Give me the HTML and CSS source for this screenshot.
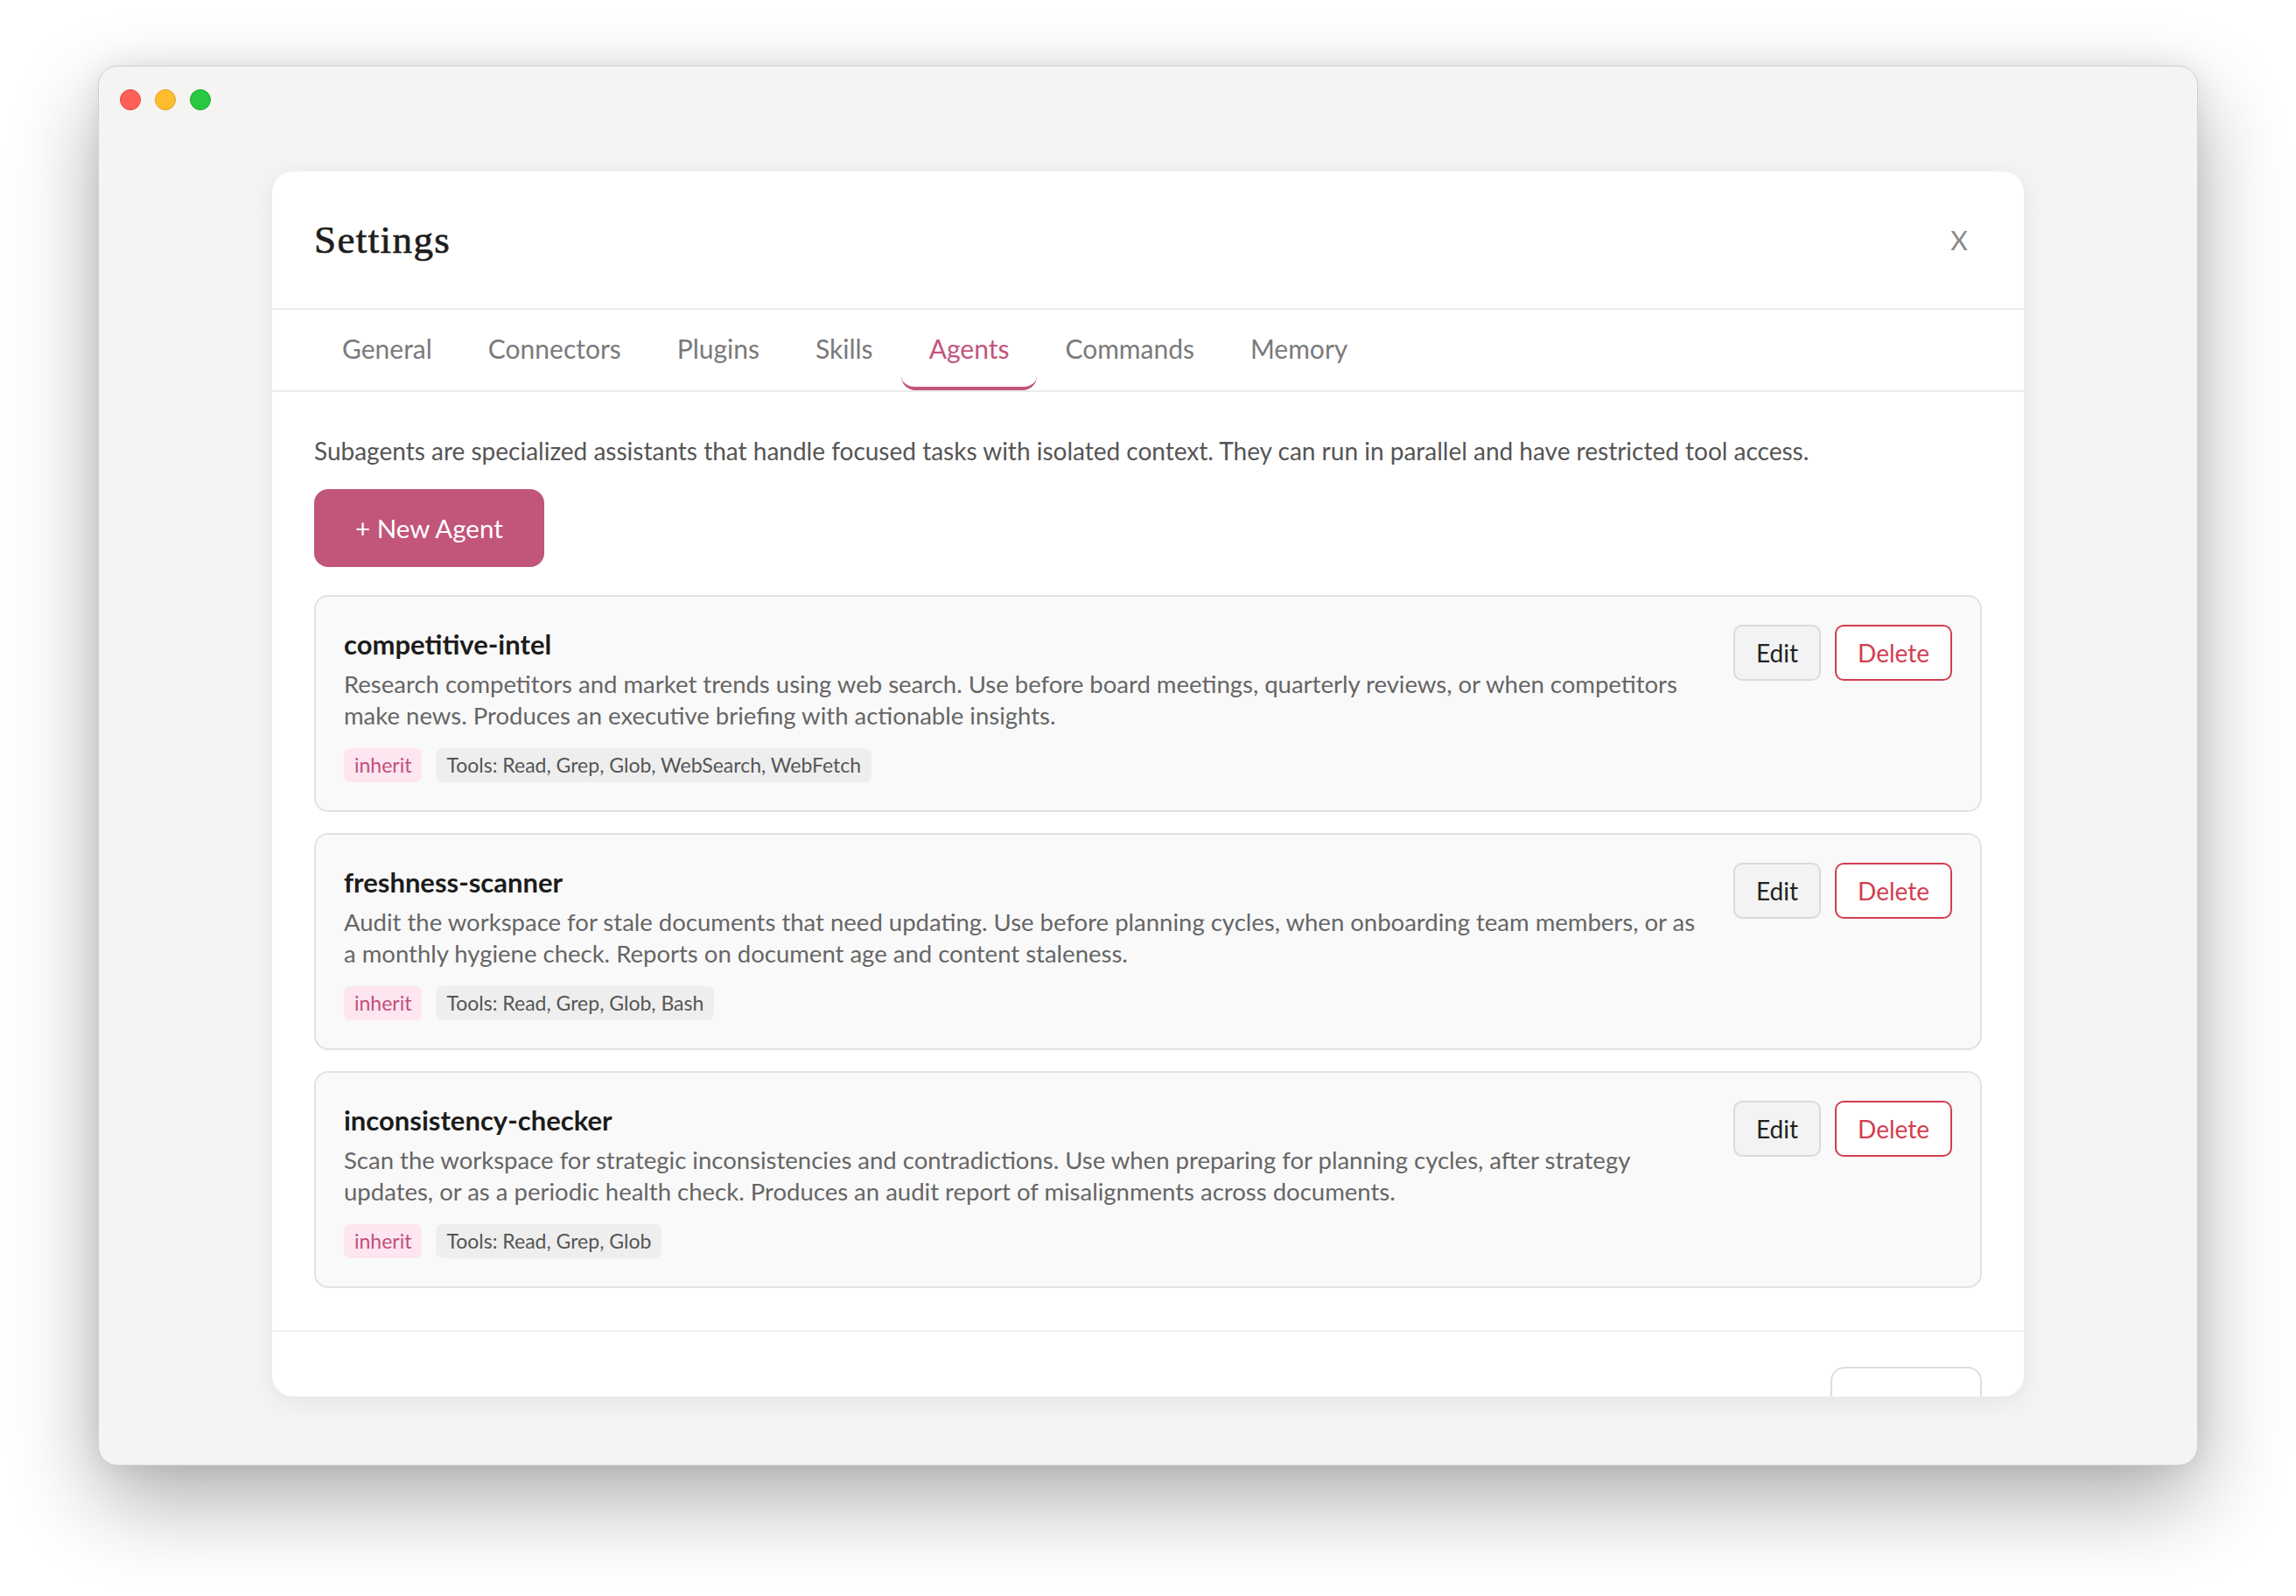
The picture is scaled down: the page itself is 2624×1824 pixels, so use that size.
FILE: index.html
```html
<!DOCTYPE html>
<html lang="en">
<head>
<meta charset="utf-8">
<title>Settings</title>
<link rel="stylesheet" href="styles.css">
</head>
<body>
<div class="window">
  <div class="titlebar">
    <span class="light red"></span>
    <span class="light yellow"></span>
    <span class="light green"></span>
  </div>
  <div class="modal">
    <div class="modal-header">
      <h1 class="modal-title">Settings</h1>
      <button class="close-btn">X</button>
    </div>
    <nav class="tabs">
      <span class="tab">General</span>
      <span class="tab">Connectors</span>
      <span class="tab">Plugins</span>
      <span class="tab">Skills</span>
      <span class="tab active">Agents</span>
      <span class="tab">Commands</span>
      <span class="tab">Memory</span>
    </nav>
    <div class="modal-body">
      <p class="intro">Subagents are specialized assistants that handle focused tasks with isolated context. They can run in parallel and have restricted tool access.</p>
      <button class="primary-btn">+ New Agent</button>
      <div class="agent-list">
        <div class="agent-card">
          <div class="agent-info">
            <div class="agent-name">competitive-intel</div>
            <p class="agent-desc">Research competitors and market trends using web search. Use before board meetings, quarterly reviews, or when competitors make news. Produces an executive briefing with actionable insights.</p>
            <div class="tags">
              <span class="tag tag-model">inherit</span>
              <span class="tag tag-tools">Tools: Read, Grep, Glob, WebSearch, WebFetch</span>
            </div>
          </div>
          <div class="agent-actions">
            <button class="btn btn-edit">Edit</button>
            <button class="btn btn-delete">Delete</button>
          </div>
        </div>
        <div class="agent-card">
          <div class="agent-info">
            <div class="agent-name">freshness-scanner</div>
            <p class="agent-desc">Audit the workspace for stale documents that need updating. Use before planning cycles, when onboarding team members, or as a monthly hygiene check. Reports on document age and content staleness.</p>
            <div class="tags">
              <span class="tag tag-model">inherit</span>
              <span class="tag tag-tools">Tools: Read, Grep, Glob, Bash</span>
            </div>
          </div>
          <div class="agent-actions">
            <button class="btn btn-edit">Edit</button>
            <button class="btn btn-delete">Delete</button>
          </div>
        </div>
        <div class="agent-card">
          <div class="agent-info">
            <div class="agent-name">inconsistency-checker</div>
            <p class="agent-desc">Scan the workspace for strategic inconsistencies and contradictions. Use when preparing for planning cycles, after strategy updates, or as a periodic health check. Produces an audit report of misalignments across documents.</p>
            <div class="tags">
              <span class="tag tag-model">inherit</span>
              <span class="tag tag-tools">Tools: Read, Grep, Glob</span>
            </div>
          </div>
          <div class="agent-actions">
            <button class="btn btn-edit">Edit</button>
            <button class="btn btn-delete">Delete</button>
          </div>
        </div>
      </div>
    </div>
    <div class="modal-footer">
      <button class="footer-btn" aria-label="Done"></button>
    </div>
  </div>
</div>
</body>
</html>
```
FILE: styles.css
```css
* { box-sizing: border-box; }

html, body {
  margin: 0;
  padding: 0;
  background: #ffffff;
}

body {
  width: 2624px;
  height: 1824px;
  overflow: hidden;
  font-family: "Lato", "Liberation Sans", sans-serif;
}

.window {
  width: 2400px;
  height: 1600px;
  margin: 75px auto 0;
  background: #f5f4f2;
  border: 1px solid #cfcfcf;
  border-radius: 22px;
  box-shadow: 0 40px 100px rgba(0, 0, 0, 0.32), 0 0 30px rgba(0, 0, 0, 0.08);
  display: flex;
  flex-direction: column;
}

.titlebar {
  height: 120px;
  flex: none;
  display: flex;
  gap: 16px;
  padding: 26px 0 0 24px;
}

.light {
  width: 24px;
  height: 24px;
  border-radius: 50%;
}
.light.red { background: #fe5f57; border: 1px solid #e2463f; }
.light.yellow { background: #febc2e; border: 1px solid #dea123; }
.light.green { background: #28c840; border: 1px solid #1aab29; }

.modal {
  width: 2002px;
  height: 1400px;
  margin: 0 auto;
  background: #ffffff;
  border-radius: 24px;
  box-shadow: 0 6px 30px rgba(0, 0, 0, 0.07);
  overflow: hidden;
  display: flex;
  flex-direction: column;
}

.modal-header {
  flex: none;
  display: flex;
  align-items: center;
  justify-content: space-between;
  padding: 48px 48px;
  border-bottom: 2px solid #ececec;
}

.modal-title {
  margin: 0;
  font-family: "Liberation Serif", "Times New Roman", serif;
  font-weight: normal;
  font-size: 45px;
  letter-spacing: 1.4px;
  line-height: 60px;
  color: #1d1d1d;
  -webkit-text-stroke: 0.7px #1d1d1d;
}

.close-btn {
  width: 52px;
  height: 52px;
  border: none;
  background: none;
  padding: 0;
  font-family: "Lato", "Liberation Sans", sans-serif;
  font-size: 30px;
  color: #8a8a8a;
  cursor: pointer;
}

.tabs {
  flex: none;
  display: flex;
  padding: 0 48px;
  border-bottom: 2px solid #ececec;
}

.tab {
  padding: 22px 32px 22px;
  line-height: 44px;
  font-size: 30px;
  color: #7a7a7a;
  border-bottom: 4px solid transparent;
  border-radius: 0 0 16px 16px;
}

.tab.active {
  color: #c2557b;
  border-bottom-color: #c2557b;
}

.modal-body {
  flex: none;
  padding: 48px 48px 48px;
}

.intro {
  margin: 0 0 24px;
  font-size: 28px;
  line-height: 39px;
  color: #555555;
}

.primary-btn {
  display: block;
  height: 89px;
  padding: 0 47px;
  border: none;
  border-radius: 16px;
  background: #c2557a;
  color: #ffffff;
  font-family: "Lato", "Liberation Sans", sans-serif;
  font-size: 29.5px;
  margin-bottom: 32px;
}

.agent-list {
  display: flex;
  flex-direction: column;
  gap: 24px;
}

.agent-card {
  display: flex;
  gap: 24px;
  padding: 32px;
  background: #f9f9f9;
  border: 2px solid #e2e2e2;
  border-radius: 16px;
}

.agent-info {
  flex: 1;
  min-width: 0;
}

.agent-name {
  font-size: 31px;
  font-weight: 700;
  line-height: 44px;
  color: #1c1c1c;
  margin-bottom: 6px;
}

.agent-desc {
  margin: 0;
  font-size: 27.5px;
  line-height: 36px;
  color: #666666;
}

.tags {
  display: flex;
  gap: 16px;
  margin-top: 19px;
}

.tag {
  font-size: 23px;
  line-height: 31px;
  padding: 4px 12px;
  border-radius: 8px;
}

.tag-model {
  background: #fde6f0;
  color: #c24e7c;
}

.tag-tools {
  background: #eeeeee;
  color: #555555;
}

.agent-actions {
  flex: none;
  display: flex;
  gap: 16px;
  align-items: flex-start;
}

.btn {
  height: 64px;
  padding: 0 24px;
  border-radius: 10px;
  font-family: "Lato", "Liberation Sans", sans-serif;
  font-size: 28px;
  cursor: pointer;
}

.btn-edit {
  background: #f3f3f3;
  border: 2px solid #dadada;
  color: #222222;
}

.btn-delete {
  background: #ffffff;
  border: 2px solid #d23d50;
  color: #d23d50;
}

.modal-footer {
  flex: none;
  display: flex;
  justify-content: flex-end;
  padding: 40px 48px;
  border-top: 2px solid #efefef;
}

.footer-btn {
  width: 173px;
  height: 90px;
  background: #ffffff;
  border: 2px solid #dedede;
  border-radius: 16px;
}
```
